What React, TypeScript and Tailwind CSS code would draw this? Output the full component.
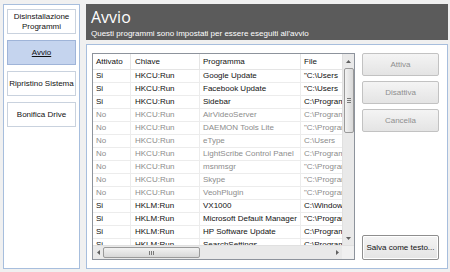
import React from "react";

type Row = { on: boolean; key: string; prog: string; file: string };

const rows: Row[] = [
  { on: true, key: "HKCU:Run", prog: "Google Update", file: "\"C:\\Users" },
  { on: true, key: "HKCU:Run", prog: "Facebook Update", file: "\"C:\\Users" },
  { on: true, key: "HKCU:Run", prog: "Sidebar", file: "C:\\Program" },
  { on: false, key: "HKCU:Run", prog: "AirVideoServer", file: "C:\\Program" },
  { on: false, key: "HKCU:Run", prog: "DAEMON Tools Lite", file: "\"C:\\Program" },
  { on: false, key: "HKCU:Run", prog: "eType", file: "C:\\Users" },
  { on: false, key: "HKCU:Run", prog: "LightScribe Control Panel", file: "C:\\Program" },
  { on: false, key: "HKCU:Run", prog: "msnmsgr", file: "\"C:\\Program" },
  { on: false, key: "HKCU:Run", prog: "Skype", file: "\"C:\\Program" },
  { on: false, key: "HKCU:Run", prog: "VeohPlugin", file: "\"C:\\Program" },
  { on: true, key: "HKLM:Run", prog: "VX1000", file: "C:\\Windows" },
  { on: true, key: "HKLM:Run", prog: "Microsoft Default Manager", file: "\"C:\\Program" },
  { on: true, key: "HKLM:Run", prog: "HP Software Update", file: "C:\\Program" },
  { on: true, key: "HKLM:Run", prog: "SearchSettings", file: "C:\\Program" },
];

const font = { fontFamily: "Tahoma, 'Liberation Sans', Arial, sans-serif" };

function NavButton({ children, active }: { children: React.ReactNode; active?: boolean }) {
  return (
    <div
      className={
        active
          ? "h-[25px] flex items-center justify-center text-center border border-[#9fb4d8] bg-[#c5d4ee] text-[8px] leading-[10px] text-[#111] underline whitespace-nowrap"
          : "h-[25px] flex items-center justify-center text-center border border-[#c9d2de] bg-white text-[8px] leading-[10px] text-[#111] whitespace-nowrap"
      }
    >
      {children}
    </div>
  );
}

function SideButton({ children, disabled }: { children: React.ReactNode; disabled?: boolean }) {
  return (
    <div
      className={
        "w-[77px] flex shrink-0 items-center justify-center rounded-[2px] bg-gradient-to-b from-[#f4f4f4] to-[#e4e4e4] text-[8px] whitespace-nowrap " +
        (disabled
          ? "h-[23px] border border-[#c2c2c2] text-[#8f8f8f]"
          : "h-[25px] border border-[#8e8e8e] text-[#111] shadow-[inset_0_0_0_1px_#ffffff]")
      }
    >
      {children}
    </div>
  );
}

export default function App() {
  return (
    <div className="w-[450px] h-[272px] bg-[#f0f0f0] flex gap-[6px] pt-[4px] pl-[3px] pr-[2px] pb-[3px] overflow-hidden" style={font}>
      {/* left nav */}
      <div className="w-[77px] border border-[#a7bedd] bg-white flex flex-col gap-[6px] pt-[4px] px-[3px]">
        <NavButton>
          <span>
            Disinstallazione
            <br />
            Programmi
          </span>
        </NavButton>
        <NavButton active>Avvio</NavButton>
        <NavButton>Ripristino Sistema</NavButton>
        <NavButton>Bonifica Drive</NavButton>
      </div>

      {/* right column */}
      <div className="flex-1 flex flex-col gap-[4px] min-h-0">
        <div className="h-[36px] shrink-0 bg-[#5b5b5b] pl-[5px] pt-[3px] flex flex-col">
          <div className="text-white text-[16px] leading-[21px]" style={{ fontFamily: "'Open Sans', 'Liberation Sans', sans-serif" }}>Avvio</div>
          <div className="text-white text-[8px] leading-[10px] mt-[1px]">Questi programmi sono impostati per essere eseguiti all'avvio</div>
        </div>

        <div className="flex-1 min-h-0 border border-[#a7bedd] bg-white flex gap-[7px] pt-[8px] pl-[5px] pr-[8px] pb-[8px]">
          {/* table */}
          <div className="w-[263px] min-h-0 border border-[#8d939c] flex flex-col overflow-hidden">
            <div className="flex-1 flex min-h-0">
              <div className="flex-1 min-h-0 flex flex-col overflow-hidden">
                <div className="h-[16px] flex shrink-0 text-[8px] text-[#111] border-b border-[#e5e5e5]">
                  <div className="w-[38px] pl-[3px] flex items-center border-r border-[#e5e5e5]">Attivato</div>
                  <div className="w-[69px] pl-[4px] flex items-center border-r border-[#e5e5e5]">Chiave</div>
                  <div className="w-[101px] pl-[3px] flex items-center border-r border-[#e5e5e5]">Programma</div>
                  <div className="flex-1 pl-[3px] flex items-center whitespace-nowrap overflow-hidden">File</div>
                </div>
                {rows.map((r, i) => (
                  <div
                    key={i}
                    className={
                      "h-[13px] flex shrink-0 text-[8px] border-b border-[#ececec] " +
                      (r.on ? "text-[#111]" : "text-[#8c8c8c]")
                    }
                  >
                    <div className="w-[38px] pl-[3px] flex items-center border-r border-[#ececec]">{r.on ? "Si" : "No"}</div>
                    <div className="w-[69px] pl-[4px] flex items-center border-r border-[#ececec]">{r.key}</div>
                    <div className="w-[101px] pl-[3px] flex items-center border-r border-[#ececec] whitespace-nowrap overflow-hidden">{r.prog}</div>
                    <div className="flex-1 pl-[3px] flex items-center whitespace-nowrap overflow-hidden">{r.file}</div>
                  </div>
                ))}
              </div>
              {/* vertical scrollbar */}
              <div className="w-[12px] shrink-0 bg-[#e9e9e9] flex flex-col items-center border-l border-[#e0e0e0]">
                <div className="h-[14px] w-full flex shrink-0 items-center justify-center">
                  <svg width="5" height="3" viewBox="0 0 5 3"><path d="M0 3 L2.5 0 L5 3 Z" fill="#606060" /></svg>
                </div>
                <div className="h-[65px] w-[10px] shrink-0 rounded-[2px] border border-[#9a9a9a] bg-gradient-to-r from-[#f2f2f2] to-[#d8d8d8] flex flex-col items-center justify-center gap-[1px]">
                  <div className="w-[4px] h-[1px] bg-[#7a7a7a]" />
                  <div className="w-[4px] h-[1px] bg-[#7a7a7a]" />
                  <div className="w-[4px] h-[1px] bg-[#7a7a7a]" />
                </div>
                <div className="flex-1" />
                <div className="h-[14px] w-full flex shrink-0 items-center justify-center">
                  <svg width="5" height="3" viewBox="0 0 5 3"><path d="M0 0 L2.5 3 L5 0 Z" fill="#606060" /></svg>
                </div>
              </div>
            </div>
            {/* horizontal scrollbar */}
            <div className="h-[14px] flex shrink-0 border-t border-[#e0e0e0]">
              <div className="flex-1 bg-[#e9e9e9] flex items-center">
                <div className="w-[10px] h-full flex items-center justify-center">
                  <svg width="3" height="5" viewBox="0 0 3 5"><path d="M3 0 L0 2.5 L3 5 Z" fill="#606060" /></svg>
                </div>
                <div className="w-[97px] h-[11px] rounded-[2px] border border-[#9a9a9a] bg-gradient-to-b from-[#f2f2f2] to-[#d8d8d8] flex items-center justify-center gap-[1px]">
                  <div className="w-[1px] h-[4px] bg-[#7a7a7a]" />
                  <div className="w-[1px] h-[4px] bg-[#7a7a7a]" />
                  <div className="w-[1px] h-[4px] bg-[#7a7a7a]" />
                </div>
                <div className="flex-1" />
                <div className="w-[10px] h-full flex items-center justify-center">
                  <svg width="3" height="5" viewBox="0 0 3 5"><path d="M0 0 L3 2.5 L0 5 Z" fill="#606060" /></svg>
                </div>
              </div>
              <div className="w-[12px] bg-[#f0f0f0]" />
            </div>
          </div>

          {/* buttons */}
          <div className="flex flex-col gap-[5px]">
            <SideButton disabled>Attiva</SideButton>
            <SideButton disabled>Disattiva</SideButton>
            <SideButton disabled>Cancella</SideButton>
            <div className="flex-1" />
            <SideButton>Salva come testo...</SideButton>
          </div>
        </div>
      </div>
    </div>
  );
}
